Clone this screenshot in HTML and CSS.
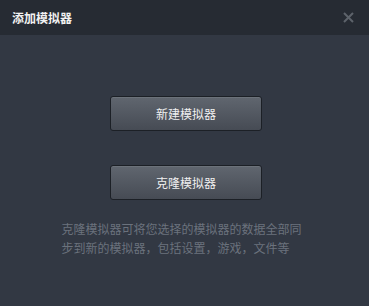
FILE: index.html
```html
<!DOCTYPE html>
<html lang="zh">
<head>
<meta charset="utf-8">
<link rel="stylesheet" href="styles.css">
</head>
<body>
<div class="dialog">
  <div class="header">
    <span class="title">添加模拟器</span>
    <svg class="close" width="11" height="11" viewBox="0 0 11 11"><path d="M1 1L10 10M10 1L1 10" stroke="#5d636b" stroke-width="2"/></svg>
  </div>
  <div class="body">
    <button class="btn">新建模拟器</button>
    <button class="btn">克隆模拟器</button>
    <p class="desc">克隆模拟器可将您选择的模拟器的数据全部同<br>步到新的模拟器，包括设置，游戏，文件等</p>
  </div>
</div>
</body>
</html>
```
FILE: styles.css
```css
html, body { margin: 0; padding: 0; }
body { width: 369px; height: 306px; background: #323843; font-family: "Noto Sans CJK SC", "Noto Sans", sans-serif; overflow: hidden; }
.dialog { width: 369px; height: 306px; display: flex; flex-direction: column; }
.header { height: 35px; background: #262b33; display: flex; align-items: center; justify-content: space-between; padding: 0 15px 0 12px; flex-shrink: 0; }
.title { color: #f2f2f2; font-size: 12px; font-weight: 700; line-height: 1; }
.close { display: block; }
.body { display: flex; flex-direction: column; align-items: center; padding-top: 61px; padding-left: 3px; }
.btn { width: 152px; height: 35px; border: 1px solid #1c2026; border-radius: 3px; background: linear-gradient(#60666f, #464b54); box-shadow: inset 0 1px 0 rgba(255,255,255,0.08); color: #f0f0f0; font-family: inherit; font-size: 12px; padding: 0; margin: 0 0 34px; cursor: pointer; }
.btn + .btn { margin-bottom: 19px; }
.desc { margin: 0 0 0 -3px; color: #6b727d; font-size: 12px; line-height: 19px; width: 246px; text-align: left; }
```
